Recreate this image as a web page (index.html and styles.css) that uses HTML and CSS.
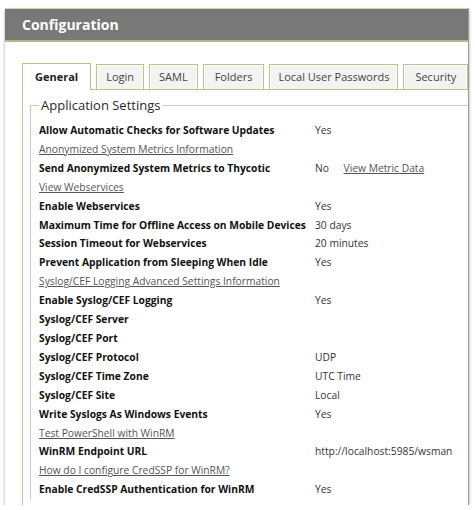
FILE: index.html
```html
<!DOCTYPE html>
<html>
<head>
<meta charset="utf-8">
<link rel="stylesheet" href="styles.css">
</head>
<body>
<div class="frame">
  <div class="header">Configuration</div>
  <div class="content">
    <div class="tabs">
      <div class="tab active">General</div>
      <div class="tab">Login</div>
      <div class="tab">SAML</div>
      <div class="tab wide">Folders</div>
      <div class="tab narrow">Local User Passwords</div>
      <div class="tab wide">Security</div>
    </div>
    <div class="panel">
      <fieldset class="settings">
        <legend>Application Settings</legend>
        <div class="grid">
          <div class="label">Allow Automatic Checks for Software Updates</div><div class="value">Yes</div>
          <div class="link"><a href="#">Anonymized System Metrics Information</a></div>
          <div class="label">Send Anonymized System Metrics to Thycotic</div><div class="value">No <a href="#" class="metric">View Metric Data</a></div>
          <div class="link"><a href="#">View Webservices</a></div>
          <div class="label">Enable Webservices</div><div class="value">Yes</div>
          <div class="label">Maximum Time for Offline Access on Mobile Devices</div><div class="value">30 days</div>
          <div class="label">Session Timeout for Webservices</div><div class="value">20 minutes</div>
          <div class="label">Prevent Application from Sleeping When Idle</div><div class="value">Yes</div>
          <div class="link"><a href="#">Syslog/CEF Logging Advanced Settings Information</a></div>
          <div class="label">Enable Syslog/CEF Logging</div><div class="value">Yes</div>
          <div class="label">Syslog/CEF Server</div><div class="value"></div>
          <div class="label">Syslog/CEF Port</div><div class="value"></div>
          <div class="label">Syslog/CEF Protocol</div><div class="value">UDP</div>
          <div class="label">Syslog/CEF Time Zone</div><div class="value">UTC Time</div>
          <div class="label">Syslog/CEF Site</div><div class="value">Local</div>
          <div class="label">Write Syslogs As Windows Events</div><div class="value">Yes</div>
          <div class="link"><a href="#">Test PowerShell with WinRM</a></div>
          <div class="label">WinRM Endpoint URL</div><div class="value">http://localhost:5985/wsman</div>
          <div class="link"><a href="#">How do I configure CredSSP for WinRM?</a></div>
          <div class="label">Enable CredSSP Authentication for WinRM</div><div class="value">Yes</div>
        </div>
      </fieldset>
    </div>
  </div>
</div>
</body>
</html>
```
FILE: styles.css
```css
html, body {
  margin: 0;
  padding: 0;
  background: #ffffff;
}
body {
  font-family: "Open Sans", "Liberation Sans", sans-serif;
  color: #1e1e1e;
  overflow: hidden;
}
.frame {
  margin: 8px 0 0 5px;
  width: 463px;
  height: 497px;
  border-right: 1px solid #9a9a9a;
  box-shadow: 0 2px 3px rgba(0,0,0,0.35);
  background: #fff;
  overflow: hidden;
}
.header {
  height: 31px;
  background: #787878;
  border-top: 1px solid #c9d6ae;
  border-bottom: 2px solid #a8c079;
  color: #fff;
  font-weight: 700;
  font-size: 14px;
  line-height: 31px;
  padding-left: 17px;
}
.content {
  padding: 21px 0 0 17px;
}
.tabs {
  display: flex;
  align-items: flex-end;
  gap: 5px;
  height: 26px;
}
.tab {
  height: 25px;
  box-sizing: border-box;
  padding: 0 9px;
  border: 1px solid #b3c78a;
  border-bottom: none;
  box-shadow: inset 1px 1px 0 #ffffff, inset -1px 0 0 #ffffff;
  background: #f3f4f1;
  font-size: 11px;
  line-height: 23px;
  color: #444;
  white-space: nowrap;
}
.tab.wide {
  padding: 0 11px;
}
.tab.narrow {
  padding: 0 8px;
}
.tab.active {
  background: #fff;
  font-weight: 700;
  color: #1e1e1e;
  padding: 0 12px;
  position: relative;
  z-index: 1;
  margin-bottom: -1px;
  height: 27px;
  line-height: 25px;
}
.panel {
  border-top: 1px solid #b3c78a;
  border-left: 1px solid #c3cb98;
  padding: 6px 0 0 7px;
  height: 420px;
}
.settings {
  margin: 0;
  border: 1px solid #c9cbbd;
  border-right: none;
  border-bottom: none;
  padding: 7px 0 0 8px;
}
.settings legend {
  font-size: 13px;
  color: #2a2a2a;
  padding: 0 2px;
  margin-left: 0;
  line-height: 18px;
}
.grid {
  display: grid;
  grid-template-columns: 276px 1fr;
  font-size: 10.27px;
  line-height: 18.9px;
}
.label {
  font-weight: 700;
  white-space: nowrap;
  color: #111;
}
.value {
  color: #333;
  white-space: nowrap;
}
.link {
  grid-column: 1 / 3;
}
.link a, .value a {
  color: #555;
  text-decoration: underline;
}
.metric {
  margin-left: 12px;
}
```
